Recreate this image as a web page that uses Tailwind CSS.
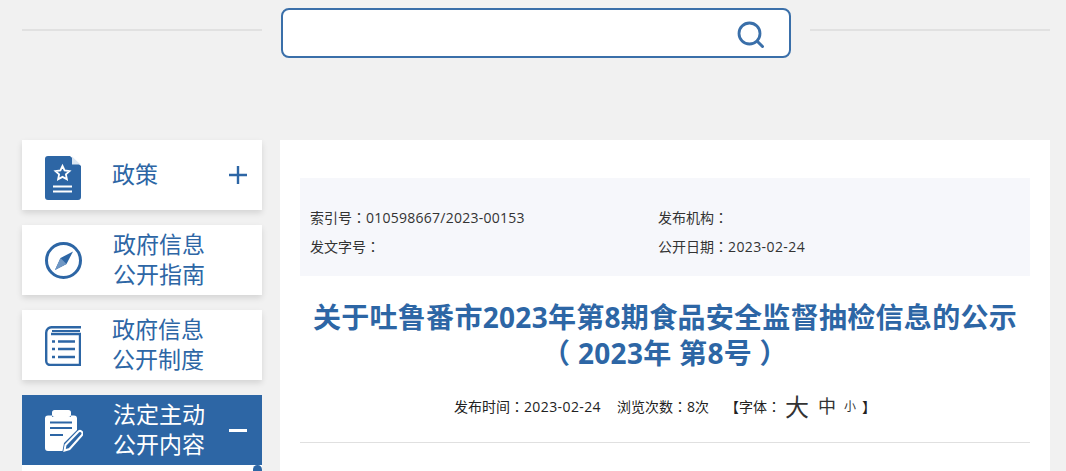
<!DOCTYPE html>
<html lang="zh-CN">
<head>
    <meta charset="UTF-8">
    <title>关于吐鲁番市2023年第8期食品安全监督抽检信息的公示</title>
    <script src="https://cdn.jsdelivr.net/npm/@tailwindcss/browser@4"></script>
</head>
<body class="h-[471px] overflow-hidden bg-[#f1f1f1] font-['Open_Sans','Noto_Sans_CJK_SC',sans-serif]">
    <div class="w-[1028px] ml-[22px]">
        <!-- Search -->
        <div class="flex items-center justify-between h-[58px] pt-2">
            <div class="w-[240px] h-[2px] bg-[#e1e1e1] -mt-[6px]"></div>
            <div class="flex items-center justify-end w-[510px] h-[50px] ml-[19px] mr-[19px] bg-white border-2 border-[#3a6fa9] rounded-lg pr-[24px]">
                <svg class="w-[28px] h-[28px] mt-[3px]" viewBox="0 0 28 28" fill="none" stroke="#3a6fa9">
                    <circle cx="12.500" cy="12.500" r="10.500" stroke-width="2.800"></circle>
                    <path d="M20.500 20.500l5 5" stroke-width="3" stroke-linecap="round"></path>
                </svg>
            </div>
            <div class="w-[240px] h-[2px] bg-[#e1e1e1] -mt-[6px]"></div>
        </div>

        <div class="flex gap-[18px] mt-[82px]">
            <!-- Sidebar -->
            <div class="relative w-[240px] shrink-0 flex flex-col gap-[15px] text-[23px] leading-[30px] text-[#2d66a5]">
                <div class="flex items-center h-[70px] bg-white shadow-[0_3px_6px_rgba(0,0,0,0.12)]">
                    <div class="w-[90px] pl-[23px] shrink-0">
                        <svg class="w-[36px] h-[44px] mt-[6px]" viewBox="0 0 36 44">
                            <path d="M3 0H25L36 10V41a3 3 0 0 1-3 3H3a3 3 0 0 1-3-3V3a3 3 0 0 1 3-3z" fill="#2d66a5"></path>
                            <path d="M27 0.500V8.500H35.500z" fill="#dbe6f2"></path>
                            <path d="M17.500 10l2.100 4.500 4.900.6-3.600 3.300 1 4.900-4.400-2.400-4.400 2.400 1-4.900-3.600-3.300 4.900-.6z" fill="none" stroke="#fff" stroke-width="1.800"></path>
                            <path d="M8 30.500H27M8 35.500H27" stroke="#fff" stroke-width="1.800"></path>
                        </svg>
                    </div>
                    <span class="flex-1 -mt-[3px]">政策</span>
                    <svg class="w-[18px] h-[18px] mr-[15px]" viewBox="0 0 18 18" stroke="#2d66a5" stroke-width="2.400"><path d="M0 9H18M9 0V18"></path></svg>
                </div>
                <div class="flex items-center h-[70px] bg-white shadow-[0_3px_6px_rgba(0,0,0,0.12)]">
                    <div class="w-[91px] pl-[23px] shrink-0">
                        <svg class="w-[37px] h-[37px] mt-[1px]" viewBox="0 0 37 37" fill="none">
                            <circle cx="18.500" cy="18.500" r="17" stroke="#2d66a5" stroke-width="3"></circle>
                            <path d="M28 9.500L21.500 22 10 28l5.500-12z" fill="#2d66a5"></path>
                            <path d="M15.500 16L21.500 22 10 28z" fill="#6f97c4"></path>
                        </svg>
                    </div>
                    <span class="-mt-[2px]">政府信息<br>公开指南</span>
                </div>
                <div class="flex items-center h-[70px] bg-white shadow-[0_3px_6px_rgba(0,0,0,0.12)]">
                    <div class="w-[90px] pl-[23px] shrink-0">
                        <svg class="w-[36px] h-[40px] mt-[1px]" viewBox="0 0 36 40" fill="none" stroke="#2d66a5" stroke-width="2.400">
                            <path d="M36 1.200H7a5.500 5.500 0 0 0-5.800 5.500V35a4 4 0 0 0 4 4H35V8H6"></path>
                            <path d="M7 5H35" stroke-width="2"></path>
                            <path d="M7 15.500H10M13 15.500H30M7 23H10M13 23H30M7 31H10M13 31H30" stroke-width="2.400"></path>
                        </svg>
                    </div>
                    <span class="-mt-[3px]">政府信息<br>公开制度</span>
                </div>
                <div class="flex items-center h-[70px] bg-[#2d66a5] text-white">
                    <div class="w-[91px] pl-[23px] shrink-0">
                        <svg class="w-[38px] h-[42px] mt-[2px]" viewBox="0 0 38 42">
                            <path d="M3 5.500H7V7H26V5.500H29a3 3 0 0 1 3 3V20L19 33l-1.500 8H3a3 3 0 0 1-3-3V8.500a3 3 0 0 1 3-3z" fill="#fff"></path>
                            <rect x="7" y="0" width="19" height="7" rx="2.500" fill="#fff"></rect>
                            <path d="M5 12.500H27M5 18H27M5 25H18" stroke="#2d66a5" stroke-width="2.200"></path>
                            <path d="M20.500 35l-1 5.500 5-1.500L37 25a2.500 2.500 0 0 0-.5-3.500 2.500 2.500 0 0 0-3.500.5z" fill="none" stroke="#fff" stroke-width="2"></path>
                        </svg>
                    </div>
                    <span class="flex-1 -mt-[2px]">法定主动<br>公开内容</span>
                    <div class="w-[18px] h-[3px] bg-white mr-[15px]"></div>
                </div>
                <div class="h-[6px] -mt-[15px] bg-white"></div>
                <div class="absolute left-[231px] top-[325px] w-[9px] h-[6px] rounded-t-full bg-[#2d66a5]"></div>
            </div>

            <!-- Article -->
            <div class="w-[770px] h-[331px] bg-white px-5 pt-[38px] text-center">
                <div class="h-[98px] bg-[#f6f7fb] px-[10px] pt-[25px] grid grid-cols-[348px_1fr] content-start text-left text-[14px] leading-[29px] text-[#333]">
                    <div>索引号<span lang="zh-TW" class="font-['Noto_Sans_CJK_TC']">：</span><span class="tracking-[0.25px]">010598667/2023-00153</span></div>
                    <div>发布机构<span lang="zh-TW" class="font-['Noto_Sans_CJK_TC']">：</span></div>
                    <div>发文字号<span lang="zh-TW" class="font-['Noto_Sans_CJK_TC']">：</span></div>
                    <div>公开日期<span lang="zh-TW" class="font-['Noto_Sans_CJK_TC']">：</span><span class="tracking-[0.4px]">2023-02-24</span></div>
                </div>
                <h1 class="mt-[23px] text-[28px] leading-[36px] font-bold tracking-[0.3px] text-[#2d66a5]">关于吐鲁番市2023年第8期食品安全监督抽检信息的公示<br>（ 2023年 第8号 ）</h1>
                <div class="flex items-center justify-center h-[32px] mt-[20px] pb-[1px] text-[14px] text-[#222]">
                    <span>发布时间<span lang="zh-TW" class="font-['Noto_Sans_CJK_TC']">：</span><span class="tracking-[0.4px]">2023-02-24</span></span>
                    <span class="ml-[16px]">浏览次数<span lang="zh-TW" class="font-['Noto_Sans_CJK_TC']">：</span>8次</span>
                    <span class="ml-[16px]">【字体<span lang="zh-TW" class="font-['Noto_Sans_CJK_TC']">：</span></span>
                    <span class="ml-[4px] text-[24px] text-[#333]">大</span>
                    <span class="ml-[9px] text-[18px] text-[#333]">中</span>
                    <span class="ml-[8px] text-[12px] text-[#333]">小</span>
                    <span class="ml-[6px]">】</span>
                </div>
                <div class="mt-[19px] h-px bg-[#e0e0e0]"></div>
            </div>
        </div>
    </div>
</body>
</html>
